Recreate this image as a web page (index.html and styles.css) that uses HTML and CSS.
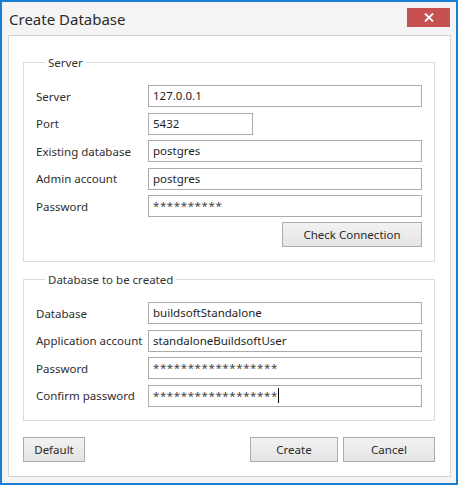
FILE: index.html
```html
<!DOCTYPE html>
<html>
<head>
<meta charset="utf-8">
<link rel="stylesheet" href="styles.css">
</head>
<body>
<div class="window">
  <div class="titlebar">
    <span class="title">Create Database</span>
    <span class="close"><svg width="10" height="9" viewBox="0 0 10 9"><path d="M1 0.5 L9 8.5 M9 0.5 L1 8.5" stroke="#fff" stroke-width="1.8"/></svg></span>
  </div>
  <div class="panel">
    <fieldset class="group">
      <legend>Server</legend>
      <div class="rows">
        <div class="row"><span class="label">Server</span><div class="field">127.0.0.1</div></div>
        <div class="row"><span class="label">Port</span><div class="field short">5432</div></div>
        <div class="row"><span class="label">Existing database</span><div class="field">postgres</div></div>
        <div class="row"><span class="label">Admin account</span><div class="field">postgres</div></div>
        <div class="row"><span class="label">Password</span><div class="field pw">**********</div></div>
      </div>
      <div class="actions"><button class="btn check">Check Connection</button></div>
    </fieldset>
    <fieldset class="group second">
      <legend>Database to be created</legend>
      <div class="rows">
        <div class="row"><span class="label">Database</span><div class="field">buildsoftStandalone</div></div>
        <div class="row"><span class="label">Application account</span><div class="field">standaloneBuildsoftUser</div></div>
        <div class="row"><span class="label">Password</span><div class="field pw">******************</div></div>
        <div class="row"><span class="label">Confirm password</span><div class="field pw">******************<span class="caret"></span></div></div>
      </div>
    </fieldset>
    <div class="footer">
      <button class="btn default">Default</button>
      <div class="right">
        <button class="btn create">Create</button>
        <button class="btn cancel">Cancel</button>
      </div>
    </div>
  </div>
</div>
</body>
</html>
```

FILE: styles.css
```css
html, body {
  margin: 0;
  padding: 0;
  background: #ffffff;
}
body {
  font-family: "Noto Sans", "Open Sans", sans-serif;
  font-size: 11.5px;
  color: #2e2e2e;
}
.window {
  width: 458px;
  height: 485px;
  box-sizing: border-box;
  border: 2px solid #1a7dd4;
  background: #f4f4f4;
  display: flex;
  flex-direction: column;
}
.titlebar {
  height: 33px;
  flex: none;
  display: flex;
  align-items: center;
  justify-content: space-between;
  padding-left: 7px;
}
.title {
  font-size: 15px;
  color: #2b2b2b;
  line-height: 20px;
}
.close {
  align-self: flex-start;
  margin-top: 6px;
  margin-right: 6px;
  width: 43px;
  height: 19px;
  background: #c75050;
  display: flex;
  align-items: center;
  justify-content: center;
}
.close svg {
  display: block;
}
.panel {
  margin: 0 5px 0 6px;
  background: #ffffff;
  border: 1px solid #d6d6d6;
  padding: 18px 15px 14px 14px;
  display: flex;
  flex-direction: column;
}
.group {
  margin: 0;
  padding: 14px 12px 14px 12px;
  border: 1px solid #dcdcdc;
  min-width: 0;
}
.group.second {
  margin-top: 9px;
  padding-bottom: 13px;
}
.group legend {
  margin-left: 9px;
  padding: 0 3px;
  line-height: 17px;
  color: #333333;
}
.rows {
  display: flex;
  flex-direction: column;
  gap: 5.5px;
}
.row {
  display: flex;
  align-items: center;
  height: 22px;
}
.label {
  width: 112px;
  flex: none;
  color: #2e2e2e;
  white-space: nowrap;
}
.field {
  flex: 1;
  height: 22px;
  box-sizing: border-box;
  border: 1px solid #ababab;
  background: #fff;
  padding: 0 4px;
  line-height: 20px;
  color: #1e1e1e;
  white-space: nowrap;
  overflow: hidden;
  display: flex;
  align-items: center;
}
.field.short {
  flex: none;
  width: 105px;
}
.field.pw {
  letter-spacing: 0.6px;
  color: #444;
}
.caret {
  display: inline-block;
  width: 1px;
  height: 15px;
  background: #000;
  margin-left: 0;
}
.actions {
  display: flex;
  justify-content: flex-end;
  margin-top: 5px;
}
.btn {
  font-family: inherit;
  font-size: 11.5px;
  color: #2a2a2a;
  height: 25px;
  box-sizing: border-box;
  border: 1px solid #acacac;
  background: linear-gradient(#f2f2f2, #e4e4e4);
  padding: 0;
  margin: 0;
  border-radius: 0;
}
.check {
  width: 140px;
}
.footer {
  margin-top: 16px;
  display: flex;
  justify-content: space-between;
}
.right {
  display: flex;
  gap: 5px;
}
.default {
  width: 62px;
}
.create {
  width: 88px;
}
.cancel {
  width: 92px;
}
```
